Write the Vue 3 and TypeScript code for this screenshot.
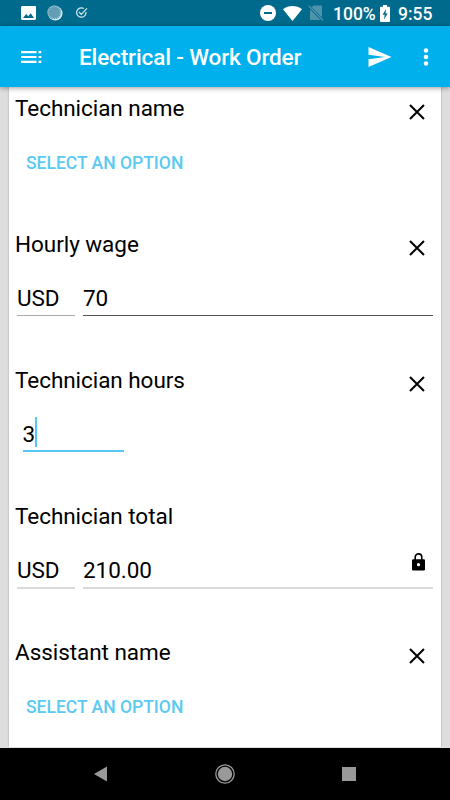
<script setup lang="ts">
type Kind = 'select' | 'money' | 'hours'

interface Field {
  label: string
  kind: Kind
  value?: string
  locked?: boolean
}

const fields: Field[] = [
  { label: 'Technician name', kind: 'select' },
  { label: 'Hourly wage', kind: 'money', value: '70' },
  { label: 'Technician hours', kind: 'hours', value: '3' },
  { label: 'Technician total', kind: 'money', value: '210.00', locked: true },
  { label: 'Assistant name', kind: 'select' },
]
</script>

<template>
  <div class="screen">
    <div class="status">
      <div class="group notices">
        <svg width="15" height="15" viewBox="0 0 15 15">
          <path fill="#fff" fill-rule="evenodd" d="M1.5 0h12A1.3 1.3 0 0 1 15 1.4v11.2a1.4 1.4 0 0 1-1.5 1.4h-12A1.4 1.4 0 0 1 0 12.600V1.400A1.400 1.400 0 0 1 1.500 0zM2 12h11L9.700 7.200 7.200 10.200 5.200 8z" />
        </svg>
        <svg width="16" height="16" viewBox="0 0 16 16">
          <circle cx="8.300" cy="8.300" r="7.200" fill="#d9ecf2" />
          <circle cx="7.300" cy="7.400" r="6.900" fill="#629fb5" />
          <circle cx="7.300" cy="7.400" r="6.300" fill="none" stroke="#a9cbd7" stroke-width="1.200" stroke-dasharray="1 1" />
        </svg>
        <svg width="12" height="12" viewBox="0 0 12 12" fill="none" stroke="#d5e8ee" stroke-width="1.200">
          <path d="M7.800 1.500A4.700 4.700 0 1 0 10 5M3 5l2.300 2.300L11 1.300" />
        </svg>
      </div>
      <div class="group system">
        <svg width="16" height="16" viewBox="0 0 16 16">
          <circle cx="8" cy="8" r="8" fill="#fff" />
          <path fill="#006a8d" d="M4 7h8v2H4z" />
        </svg>
        <svg class="wifi" width="19" height="15" viewBox="0 0 19 15">
          <path fill="#fff" d="M0 3.300C5.500-1.100 13.500-1.100 19 3.300L9.500 15z" />
        </svg>
        <svg class="sim" width="16" height="16" viewBox="0 0 16 16">
          <path fill="#4f93ab" d="M5.500.5H13a1 1 0 0 1 1 1v10.800L3.700 2.200zM2 4.200 12.600 15H3a1 1 0 0 1-1-1z" />
          <path stroke="#4f93ab" stroke-width="1.300" d="M.7.7 15 15.300" />
        </svg>
        <span class="percent">100%</span>
        <svg class="battery" width="10" height="17" viewBox="0 0 10 17">
          <path fill="#fff" d="M3 0h4v1.700h2a1 1 0 0 1 1 1V16a1 1 0 0 1-1 1H1a1 1 0 0 1-1-1V2.700a1 1 0 0 1 1-1h2z" />
          <path fill="#006a8d" d="M6 4 2.500 9.800h2.200L4 14.500 7.700 8.500H5.500z" />
        </svg>
        <span class="clock">9:55</span>
      </div>
    </div>

    <header class="bar">
      <svg class="list" width="21" height="12" viewBox="0 0 21 12">
        <path fill="#fff" d="M0 0h15.500v2.200H0zM0 4.900h15.500v2.200H0zM0 9.700h15.500v2.200H0zM17.500 0h2.800v2.200h-2.800zM17.500 4.900h2.800v2.200h-2.800zM17.500 9.700h2.800v2.200h-2.800z" />
      </svg>
      <h1>Electrical - Work Order</h1>
      <svg class="send" width="24" height="20" viewBox="0 0 24 20">
        <path fill="#fff" d="M.5 0 23.500 10 .5 20V12.200L17 10 .5 7.800z" />
      </svg>
      <svg class="more" width="6" height="18" viewBox="0 0 6 18" fill="#fff">
        <circle cx="3" cy="2.500" r="2.250" /><circle cx="3" cy="9" r="2.250" /><circle cx="3" cy="15.500" r="2.250" />
      </svg>
    </header>

    <main>
      <div class="sheet">
        <section v-for="f in fields" :key="f.label" class="field">
          <div class="head">
            <span>{{ f.label }}</span>
            <svg v-if="!f.locked" class="close" width="16" height="16" viewBox="0 0 16 16">
              <path stroke="#000" stroke-width="2" d="M1 1l14 14M15 1 1 15" />
            </svg>
          </div>
          <button v-if="f.kind === 'select'" class="option">SELECT AN OPTION</button>
          <div v-else-if="f.kind === 'money'" class="money" :class="{ locked: f.locked }">
            <span class="unit">USD</span>
            <span class="amount">
              {{ f.value }}
              <svg v-if="f.locked" class="lock" width="13" height="18" viewBox="0 0 13 18">
                <path fill="none" stroke="#000" stroke-width="1.600" d="M3.200 7V4.200a3.300 3.300 0 0 1 6.600 0V7" />
                <rect y="6.300" width="13" height="11.200" rx="1.200" />
                <circle cx="6.500" cy="11.700" r="1.600" fill="#fff" />
              </svg>
            </span>
          </div>
          <div v-else class="hours">{{ f.value }}<i class="caret"></i></div>
        </section>
      </div>
    </main>

    <nav>
      <svg width="14" height="16" viewBox="0 0 14 16"><path fill="#999" d="M13 .5v15L0 8z" /></svg>
      <svg width="20" height="20" viewBox="0 0 20 20">
        <circle cx="10" cy="10" r="9.200" fill="none" stroke="#999" stroke-width="1.300" />
        <circle cx="10" cy="10" r="7.200" fill="#999" />
      </svg>
      <svg width="14" height="14" viewBox="0 0 14 14"><path fill="#999" d="M0 0h14v14H0z" /></svg>
    </nav>
  </div>
</template>

<style>
body {
  margin: 0;
  overflow: hidden;
}
</style>

<style scoped>
.screen {
  width: 450px;
  height: 800px;
  display: flex;
  flex-direction: column;
  overflow: hidden;
  background: #dedede;
  color: #000;
  font-family: Roboto, sans-serif;
}
svg {
  display: block;
  flex: none;
}
.status {
  height: 26px;
  flex: none;
  box-sizing: border-box;
  padding: 0 17px 0 21px;
  display: flex;
  align-items: center;
  justify-content: space-between;
  background: #006a8d;
  color: #fff;
  font-size: 17.5px;
  font-weight: 500;
}
.group {
  display: flex;
  align-items: center;
}
.notices {
  gap: 11px;
}
.notices svg:last-child {
  margin-left: 2px;
}
.wifi {
  margin-left: 7px;
}
.sim {
  margin-left: 6px;
}
.percent {
  width: 43px;
  margin-left: 9px;
  white-space: nowrap;
  line-height: 26px;
  padding-top: 2px;
}
.battery {
  margin-left: 4px;
}
.clock {
  width: 35px;
  margin-left: 8px;
  line-height: 26px;
  padding-top: 2px;
}
.bar {
  height: 61px;
  flex: none;
  box-sizing: border-box;
  padding: 0 21px 0 21px;
  display: flex;
  align-items: center;
  background: #00b0ec;
  color: #fff;
  position: relative;
  box-shadow: 0 1px 5px rgba(0, 0, 0, 0.4);
}
.list {
  margin-left: -0.5px;
}
h1 {
  flex: 1;
  margin: 0 0 0 37.5px;
  padding-top: 1px;
  font-size: 22.5px;
  font-weight: 500;
  line-height: 28px;
  letter-spacing: -0.13px;
  white-space: nowrap;
}
.more {
  margin-left: 31px;
}
main {
  height: 660px;
  flex: none;
  overflow: hidden;
  padding: 0 9px;
}
.sheet {
  height: 677px;
  margin-top: -17px;
  background: #fff;
  box-shadow: 0 0 2px rgba(0, 0, 0, 0.28);
}
.field {
  height: 136px;
  box-sizing: border-box;
  padding: 24px 8px 0 6px;
  font-size: 22.5px;
  letter-spacing: -0.05px;
}
.head {
  height: 28px;
  line-height: 28px;
  display: flex;
  justify-content: space-between;
}
.close {
  margin: 9.700px 8.200px 0 0;
}
.option {
  display: block;
  margin: 27px 0 0 11px;
  padding: 0;
  border: 0;
  background: none;
  color: #5bcaf2;
  font: 500 17.500px/28px Roboto, sans-serif;
}
.money {
  display: grid;
  grid-template-columns: 57.500px 1fr;
  gap: 8.500px;
  margin: 22px 0 0 2px;
  line-height: 36px;
}
.unit,
.amount {
  height: 35px;
  border-bottom: 1px solid #aaa;
}
.amount {
  display: flex;
  justify-content: space-between;
  border-color: #555;
}
.locked .unit,
.locked .amount {
  border-bottom: 2px solid #dadada;
}
.lock {
  margin: 1px 8px 0 0;
}
.hours {
  width: 101px;
  height: 33px;
  margin: 23px 0 0 7.500px;
  display: flex;
  line-height: 34px;
  border-bottom: 2px solid #55c8f1;
}
.caret {
  width: 2px;
  height: 30px;
  background: #55c8f1;
}
nav {
  height: 52px;
  box-sizing: border-box;
  margin-top: 1px;
  padding: 0 94px 0 93.500px;
  display: flex;
  align-items: center;
  justify-content: space-between;
  background: #000;
}
</style>
